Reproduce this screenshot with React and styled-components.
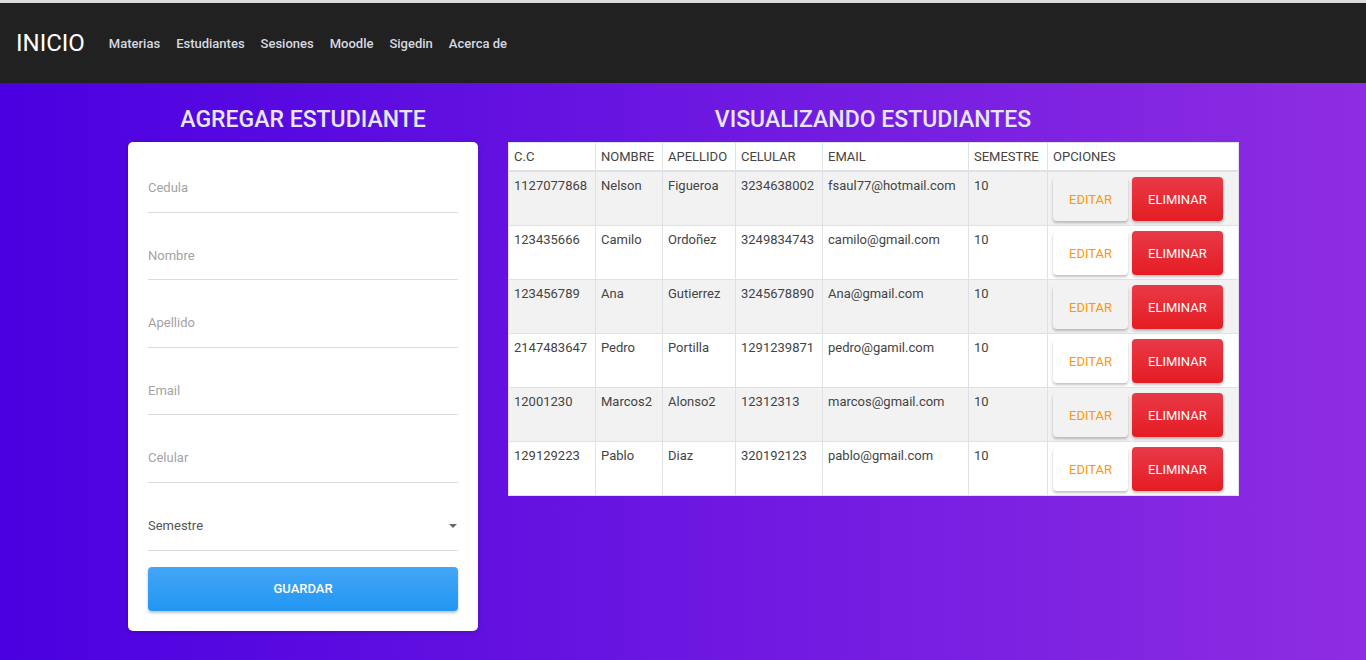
import React from 'react';
import styled, { createGlobalStyle } from 'styled-components';

const GlobalStyle = createGlobalStyle`
  html, body {
    margin: 0;
    padding: 0;
  }
  body {
    font-family: Roboto, "Liberation Sans", sans-serif;
    background: #4a00e0;
  }
  * {
    box-sizing: border-box;
  }
`;

const Page = styled.div`
  min-height: 100vh;
  border-top: 3px solid #dcdcdc;
  background: linear-gradient(to right, #4a00e0, #8e2de2);
`;

const NavBar = styled.nav`
  height: 80px;
  background: #212121;
  display: flex;
  align-items: center;
  padding: 0 16px;
`;

const Brand = styled.a`
  color: #ffffff;
  font-size: 24px;
  font-weight: 400;
  margin-right: 24px;
  text-decoration: none;
`;

const NavLink = styled.a`
  color: #d6d9e0;
  font-size: 13px;
  font-weight: 500;
  margin-right: 16px;
  text-decoration: none;
`;

const Container = styled.div`
  width: 1110px;
  margin: 0 auto;
  display: grid;
  grid-template-columns: 350px 730px;
  column-gap: 30px;
  align-items: start;
`;

const Column = styled.section`
  display: flex;
  flex-direction: column;
`;

const Heading = styled.h2`
  margin: 22px 0 8px;
  text-align: center;
  font-size: 23px;
  line-height: 29px;
  font-weight: 500;
  color: #e6e6fa;
`;

const Card = styled.form`
  background: #ffffff;
  border-radius: 5px;
  box-shadow: 0 1px 4px rgba(0, 0, 0, 0.2);
  padding: 3px 20px 20px;
`;

const Field = styled.div`
  padding: 35px 0 15.6px;
  border-bottom: 1px solid #dcdcdc;
  display: flex;
  align-items: center;
  justify-content: space-between;
`;

const Label = styled.span`
  font-size: 13px;
  line-height: 16px;
  color: ${({ dark }) => (dark ? '#555555' : '#a3a3a3')};
`;

const Caret = styled.span`
  width: 0;
  height: 0;
  border-left: 4px solid transparent;
  border-right: 4px solid transparent;
  border-top: 4px solid #666666;
  margin-right: 1px;
`;

const SaveButton = styled.button`
  width: 100%;
  height: 44px;
  margin-top: 16px;
  border: none;
  border-radius: 4px;
  background: linear-gradient(to bottom, #44a6f6, #2196f3);
  box-shadow: 0 2px 3px rgba(0, 0, 0, 0.25);
  color: #ffffff;
  font-family: inherit;
  font-size: 13px;
  font-weight: 500;
`;

const Table = styled.table`
  width: 730px;
  border-collapse: collapse;
  background: #ffffff;
  font-size: 13px;
  color: #444444;
  table-layout: fixed;
`;

const Th = styled.th`
  text-align: left;
  font-weight: 400;
  padding: 5px 5px;
  line-height: 17px;
  border: 1px solid #dee2e6;
  border-bottom: 2px solid #dee2e6;
  white-space: nowrap;
`;

const Row = styled.tr`
  background: ${({ striped }) => (striped ? '#f2f2f2' : '#ffffff')};
`;

const Td = styled.td`
  vertical-align: top;
  padding: 5px 5px 4px;
  line-height: 18px;
  height: 53px;
  border: 1px solid #dee2e6;
  white-space: nowrap;
`;

const Actions = styled.div`
  display: flex;
  gap: 4px;
`;

const ActionButton = styled.button`
  height: 44px;
  padding: 0 16px;
  border: none;
  border-radius: 4px;
  font-family: inherit;
  font-size: 13px;
  font-weight: 400;
  color: ${({ danger }) => (danger ? '#ffffff' : '#ff9800')};
  background: ${({ danger }) => (danger ? 'linear-gradient(to bottom, #e83a47, #e51c23)' : 'transparent')};
  box-shadow: 0 2px 3px rgba(0, 0, 0, 0.25);
`;

const links = ['Materias', 'Estudiantes', 'Sesiones', 'Moodle', 'Sigedin', 'Acerca de'];

const fields = ['Cedula', 'Nombre', 'Apellido', 'Email', 'Celular'];

const columns = [
  { title: 'C.C', width: 87 },
  { title: 'NOMBRE', width: 67 },
  { title: 'APELLIDO', width: 73 },
  { title: 'CELULAR', width: 87 },
  { title: 'EMAIL', width: 146 },
  { title: 'SEMESTRE', width: 79 },
  { title: 'OPCIONES', width: 191 },
];

const students = [
  { cc: '1127077868', nombre: 'Nelson', apellido: 'Figueroa', celular: '3234638002', email: 'fsaul77@hotmail.com', semestre: '10' },
  { cc: '123435666', nombre: 'Camilo', apellido: 'Ordoñez', celular: '3249834743', email: 'camilo@gmail.com', semestre: '10' },
  { cc: '123456789', nombre: 'Ana', apellido: 'Gutierrez', celular: '3245678890', email: 'Ana@gmail.com', semestre: '10' },
  { cc: '2147483647', nombre: 'Pedro', apellido: 'Portilla', celular: '1291239871', email: 'pedro@gamil.com', semestre: '10' },
  { cc: '12001230', nombre: 'Marcos2', apellido: 'Alonso2', celular: '12312313', email: 'marcos@gmail.com', semestre: '10' },
  { cc: '129129223', nombre: 'Pablo', apellido: 'Diaz', celular: '320192123', email: 'pablo@gmail.com', semestre: '10' },
];

const App = () => (
  <Page>
    <GlobalStyle />
    <NavBar>
      <Brand href="#">INICIO</Brand>
      {links.map((link) => (
        <NavLink key={link} href="#">{link}</NavLink>
      ))}
    </NavBar>
    <Container>
      <Column>
        <Heading>AGREGAR ESTUDIANTE</Heading>
        <Card onSubmit={(e) => e.preventDefault()}>
          {fields.map((field) => (
            <Field key={field}>
              <Label>{field}</Label>
            </Field>
          ))}
          <Field>
            <Label dark>Semestre</Label>
            <Caret />
          </Field>
          <SaveButton type="submit">GUARDAR</SaveButton>
        </Card>
      </Column>
      <Column>
        <Heading>VISUALIZANDO ESTUDIANTES</Heading>
        <Table>
          <colgroup>
            {columns.map((col) => (
              <col key={col.title} style={{ width: col.width }} />
            ))}
          </colgroup>
          <thead>
            <tr>
              {columns.map((col) => (
                <Th key={col.title}>{col.title}</Th>
              ))}
            </tr>
          </thead>
          <tbody>
            {students.map((s, i) => (
              <Row key={s.cc} striped={i % 2 === 0}>
                <Td>{s.cc}</Td>
                <Td>{s.nombre}</Td>
                <Td>{s.apellido}</Td>
                <Td>{s.celular}</Td>
                <Td>{s.email}</Td>
                <Td>{s.semestre}</Td>
                <Td>
                  <Actions>
                    <ActionButton>EDITAR</ActionButton>
                    <ActionButton danger>ELIMINAR</ActionButton>
                  </Actions>
                </Td>
              </Row>
            ))}
          </tbody>
        </Table>
      </Column>
    </Container>
  </Page>
);

export default App;
